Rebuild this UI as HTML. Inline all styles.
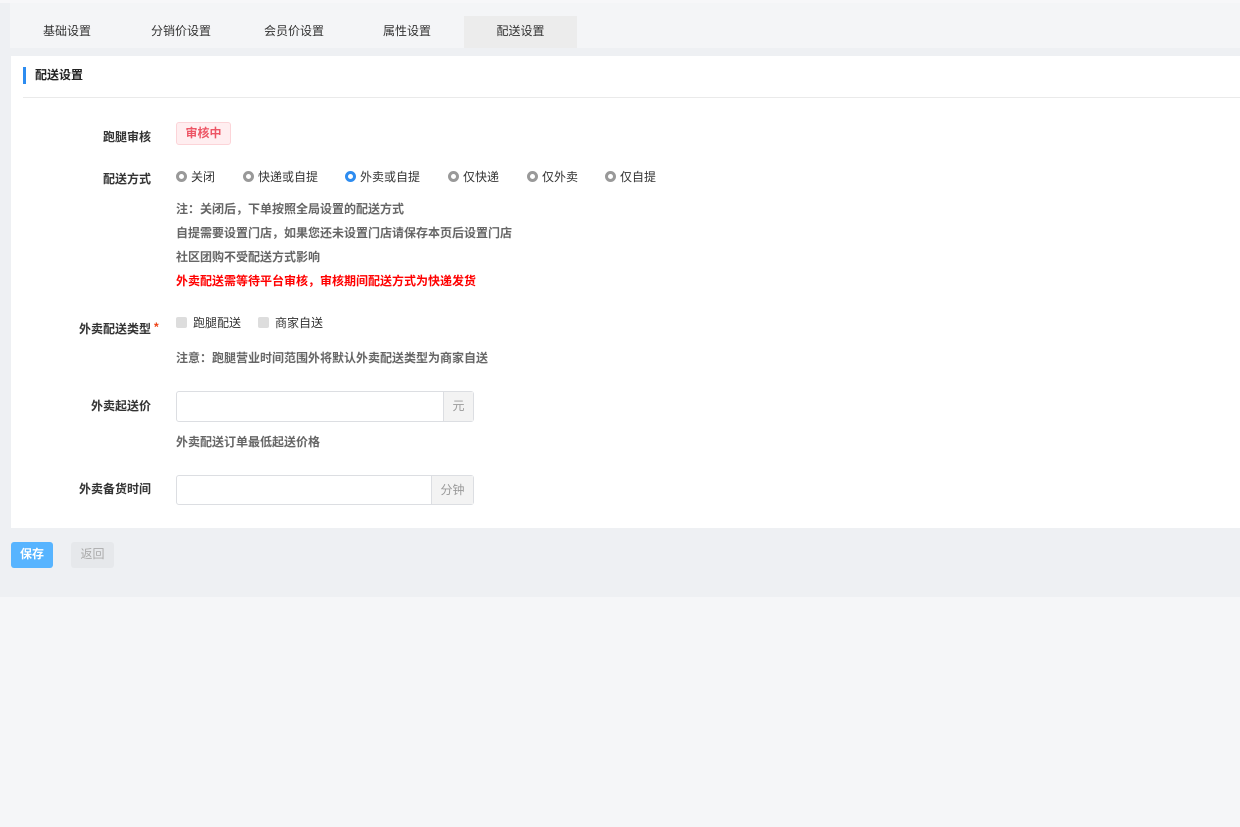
<!DOCTYPE html>
<html><head><meta charset="utf-8"><style>
*{margin:0;padding:0;box-sizing:border-box}
body{width:1240px;height:827px;background:#f5f6f8;font-family:"Liberation Sans","Noto Sans CJK SC",sans-serif;font-size:12px;color:#333;position:relative;overflow:hidden}
.grey{position:absolute;left:0;top:0;width:1240px;height:597px;background:#eef0f3}
.topline{position:absolute;left:0;top:0;width:1240px;height:3px;background:#f7f7f9}
.tabs{position:absolute;left:10px;top:3px;width:1230px;height:45px;background:#f4f5f7}
.tab{position:absolute;top:13px;height:32px;line-height:31px;text-align:center;color:#333}
.tab.act{background:#ececec;top:13px}
.card{position:absolute;left:11px;top:56px;width:1229px;height:472px;background:#fff}
.title{position:absolute;left:12px;top:11px;height:17px;border-left:3px solid #2d8cf0;padding-left:9px;line-height:16px;font-weight:bold;color:#222}
.hr{position:absolute;left:12px;top:41px;right:0;height:1px;background:#eaeaea}
.lbl{position:absolute;width:140px;text-align:right;font-weight:bold;color:#333}
.t{position:absolute;white-space:nowrap;font-weight:bold;color:#666}
.r{position:absolute;white-space:nowrap;color:#333}
.r i{display:inline-block;width:11px;height:11px;border-radius:50%;border:3px solid #999;background:#fff;vertical-align:-1px;margin-right:4px}
.r i.on{border-color:#2d8cf0}
.cb{display:inline-block;width:11px;height:11px;background:#ddd;border-radius:2px;vertical-align:-1px;margin-right:6px}
.inp{position:absolute;left:165px;width:298px;border:1px solid #dcdee2;border-radius:3px;background:#fff}
.inp span{position:absolute;right:0;top:0;bottom:0;background:#f3f3f3;border-left:1px solid #dcdee2;color:#999;text-align:center}
</style></head><body>
<div class="grey"></div><div class="topline"></div>
<div class="tabs">
<div class="tab" style="left:10px;width:94px">基础设置</div>
<div class="tab" style="left:124px;width:94px">分销价设置</div>
<div class="tab" style="left:237px;width:94px">会员价设置</div>
<div class="tab" style="left:350px;width:94px">属性设置</div>
<div class="tab act" style="left:454px;width:113px">配送设置</div>
</div>
<div class="card">
<div class="title">配送设置</div>
<div class="hr"></div>
<div class="lbl" style="left:0;top:72px">跑腿审核</div>
<div style="position:absolute;left:165px;top:66px;width:55px;height:23px;background:#ffeef0;border:1px solid #fcd4d8;border-radius:3px;color:#ed5565;font-weight:bold;text-align:center;line-height:20px">审核中</div>
<div class="lbl" style="left:0;top:114px">配送方式</div>
<div class="r" style="left:165px;top:112px"><i></i>关闭</div>
<div class="r" style="left:232px;top:112px"><i></i>快递或自提</div>
<div class="r" style="left:334px;top:112px"><i class="on"></i>外卖或自提</div>
<div class="r" style="left:437px;top:112px"><i></i>仅快递</div>
<div class="r" style="left:516px;top:112px"><i></i>仅外卖</div>
<div class="r" style="left:594px;top:112px"><i></i>仅自提</div>
<div class="t" style="left:165px;top:144px">注：关闭后，下单按照全局设置的配送方式</div>
<div class="t" style="left:165px;top:168px">自提需要设置门店，如果您还未设置门店请保存本页后设置门店</div>
<div class="t" style="left:165px;top:192px">社区团购不受配送方式影响</div>
<div class="t" style="left:165px;top:216px;color:#f00">外卖配送需等待平台审核，审核期间配送方式为快递发货</div>
<div class="lbl" style="left:0;top:264px">外卖配送类型<span style="color:#ed4014;position:absolute;left:143px">*</span></div>
<div class="r" style="left:165px;top:258px"><span class="cb"></span>跑腿配送</div>
<div class="r" style="left:247px;top:258px"><span class="cb"></span>商家自送</div>
<div class="t" style="left:165px;top:293px">注意：跑腿营业时间范围外将默认外卖配送类型为商家自送</div>
<div class="lbl" style="left:0;top:341px">外卖起送价</div>
<div class="inp" style="top:335px;height:31px"><span style="width:30px;line-height:29px">元</span></div>
<div class="t" style="left:165px;top:377px">外卖配送订单最低起送价格</div>
<div class="lbl" style="left:0;top:424px">外卖备货时间</div>
<div class="inp" style="top:419px;height:30px"><span style="width:42px;line-height:28px">分钟</span></div>
</div>
<div style="position:absolute;left:11px;top:542px;width:42px;height:26px;background:#57b4ff;border-radius:3px;color:#fff;font-weight:bold;text-align:center;line-height:25px">保存</div>
<div style="position:absolute;left:71px;top:542px;width:43px;height:26px;background:#e6e8eb;border-radius:3px;color:#aaa;text-align:center;line-height:25px">返回</div>
</body></html>
